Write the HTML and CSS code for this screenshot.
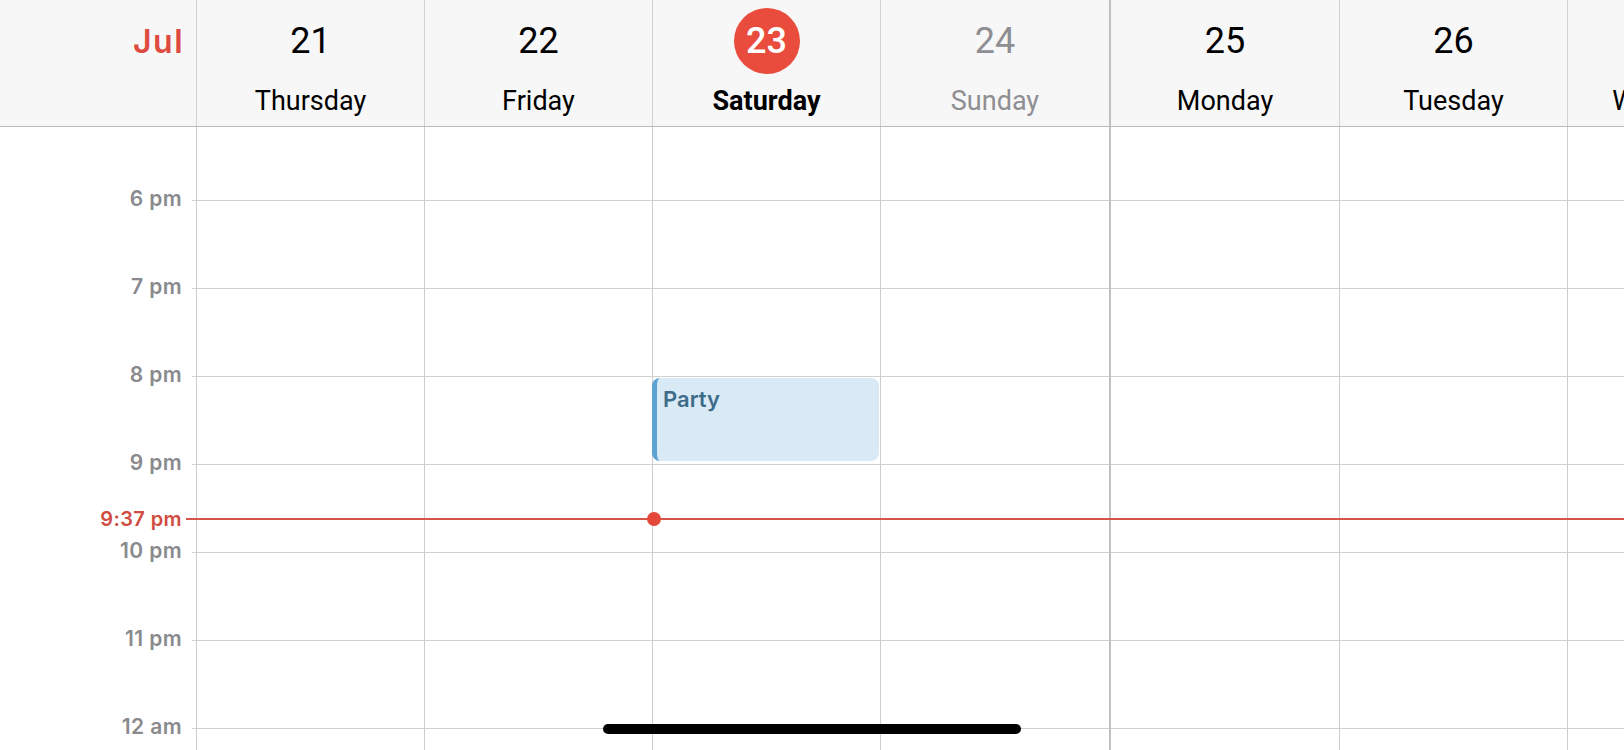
FILE: index.html
```html
<!DOCTYPE html>
<html lang="en">
<head>
<meta charset="utf-8">
<title>Calendar – Week</title>
<link rel="stylesheet" href="styles.css">
</head>
<body>
<div class="app">
  <header class="week-header">
    <div class="month">Jul</div>
    <div class="day"><span class="num">21</span><span class="name">Thursday</span></div>
    <div class="day"><span class="num">22</span><span class="name">Friday</span></div>
    <div class="day today"><span class="num">23</span><span class="name">Saturday</span></div>
    <div class="day weekend"><span class="num">24</span><span class="name">Sunday</span></div>
    <div class="day week-start"><span class="num">25</span><span class="name">Monday</span></div>
    <div class="day"><span class="num">26</span><span class="name">Tuesday</span></div>
    <div class="day"><span class="num">27</span><span class="name">Wednesday</span></div>
  </header>
  <main class="timeline">
    <div class="hours">
      <div class="hour">6 pm</div>
      <div class="hour">7 pm</div>
      <div class="hour">8 pm</div>
      <div class="hour">9 pm</div>
      <div class="hour">10 pm</div>
      <div class="hour">11 pm</div>
      <div class="hour">12 am</div>
    </div>
    <div class="grid">
      <div class="col"></div>
      <div class="col"></div>
      <div class="col">
        <div class="event">Party</div>
      </div>
      <div class="col"></div>
      <div class="col week-start"></div>
      <div class="col"></div>
      <div class="col"></div>
    </div>
    <div class="now">
      <span class="now-label">9:37 pm</span>
      <span class="now-line"></span>
      <span class="now-dot"></span>
    </div>
  </main>
  <div class="home-indicator"></div>
</div>
</body>
</html>
```

FILE: styles.css
```css
* {
  box-sizing: border-box;
  margin: 0;
  padding: 0;
}

html, body {
  width: 1624px;
  height: 750px;
  overflow: hidden;
  background: #ffffff;
}

body {
  font-family: Roboto, "Liberation Sans", sans-serif;
}

.app {
  position: relative;
  width: 1624px;
  height: 750px;
  overflow: hidden;
  display: flex;
  flex-direction: column;
}

/* ---------- header ---------- */
.week-header {
  flex: none;
  display: grid;
  grid-template-columns: 196px 228px 228px 228px 229px 230px 228px 228px;
  height: 127px;
  background: #f7f7f7;
  border-bottom: 1px solid #b9b9b9;
}

.month {
  padding-top: 26px;
  padding-right: 12px;
  text-align: right;
  font-family: Inter, "Noto Sans", sans-serif;
  font-weight: 600;
  font-size: 32px;
  line-height: 32px;
  letter-spacing: 1.5px;
  color: #de4b40;
}

.day {
  display: flex;
  flex-direction: column;
  align-items: center;
  padding-top: 8px;
  border-left: 1px solid #d2d2d2;
  white-space: nowrap;
}

.day .num {
  width: 66px;
  height: 66px;
  border-radius: 50%;
  display: flex;
  align-items: center;
  justify-content: center;
  font-size: 36px;
  line-height: 36px;
  color: #000000;
}

.day .name {
  margin-top: 14px;
  font-size: 27px;
  line-height: 27px;
  color: #000000;
}

.day.today .num {
  background: #e94b3c;
  color: #ffffff;
  font-weight: 500;
}

.day.today .name {
  font-weight: 700;
}

.day.weekend .num,
.day.weekend .name {
  color: #8e8e93;
}

.day.week-start {
  border-left: 2px solid #c0c0c0;
}

/* ---------- timeline ---------- */
.timeline {
  position: relative;
  flex: 1;
  display: grid;
  grid-template-columns: 192px 1fr;
  overflow: hidden;
}

.hours {
  display: flex;
  flex-direction: column;
  align-items: flex-end;
  padding-top: 27px;
  padding-right: 10px;
}

.hour {
  flex: none;
  height: 88px;
  display: flex;
  align-items: center;
  font-family: Inter, "Noto Sans", sans-serif;
  font-weight: 600;
  font-size: 21px;
  letter-spacing: 0.4px;
  color: #8a8a8e;
}

.grid {
  display: grid;
  grid-template-columns: 228px 228px 228px 229px 230px 228px 228px;
  padding-left: 4px;
  background-image: linear-gradient(to bottom, #d0d0d0 0, #d0d0d0 1px, transparent 1px);
  background-size: 100% 88px;
  background-position: 0 73px;
}

.col {
  position: relative;
  border-left: 1px solid #cdcdcd;
}

.col.week-start {
  border-left: 2px solid #c0c0c0;
}

.event {
  position: absolute;
  top: 251px;
  left: -1px;
  right: 1px;
  height: 83px;
  padding: 8px 0 0 6px;
  background: #d9eaf6;
  border-left: 5px solid #5aa3d3;
  border-radius: 8px;
  font-family: Inter, "Noto Sans", sans-serif;
  font-weight: 600;
  font-size: 22px;
  line-height: 1.2;
  color: #3d6c89;
}

/* current time indicator */
.now {
  position: absolute;
  top: 380px;
  left: 0;
  right: 0;
  height: 24px;
  display: flex;
  align-items: center;
}

.now-label {
  flex: none;
  width: 182px;
  text-align: right;
  font-family: Inter, "Noto Sans", sans-serif;
  font-weight: 600;
  font-size: 20px;
  letter-spacing: 0.4px;
  color: #d04c42;
}

.now-line {
  flex: 1;
  height: 2px;
  margin-left: 4px;
  background: #d5554a;
}

.now-dot {
  position: absolute;
  left: 647px;
  top: 5px;
  width: 14px;
  height: 14px;
  border-radius: 50%;
  background: #e5473b;
}

.home-indicator {
  position: absolute;
  bottom: 16px;
  left: 50%;
  width: 418px;
  height: 10px;
  margin-left: -209px;
  border-radius: 5px;
  background: #000000;
}
```
